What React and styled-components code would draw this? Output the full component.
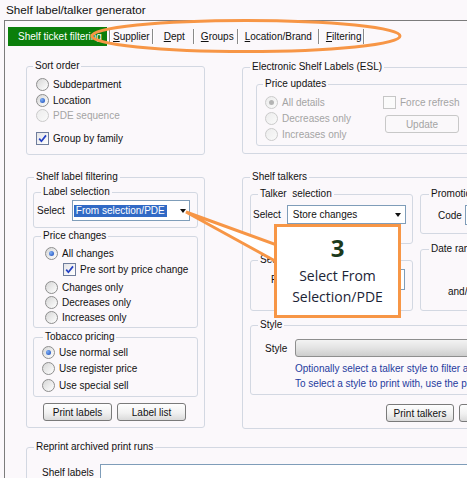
import React from 'react';
import styled, { createGlobalStyle } from 'styled-components';

const Global = createGlobalStyle`
  html, body { margin: 0; padding: 0; background: #fbf8fb; }
  body { font-family: "Liberation Sans", Arial, sans-serif; font-size: 10px; color: #111; }
  * { box-sizing: border-box; }
`;

const Page = styled.div`
  position: relative;
  width: 467px;
  height: 478px;
  overflow: hidden;
  background: #fbf8fb;
`;

const Title = styled.div`
  height: 20px;
  line-height: 20px;
  padding-left: 6px;
  font-size: 11.7px;
  color: #111;
  white-space: nowrap;
`;

const Frame = styled.div`
  margin-left: 4px;
  width: 760px;
  border-top: 1px solid #7c7c7c;
  border-left: 1px solid #7c7c7c;
`;

const TabStrip = styled.div`
  display: flex;
  align-items: center;
  height: 25px;
  padding: 6px 0 0 3px;
`;

const ActiveTab = styled.div`
  display: flex;
  align-items: center;
  height: 19px;
  width: 99px;
  margin-right: 2px;
  padding-left: 10px;
  background: #0b7f0b;
  color: #fff;
  white-space: nowrap;
`;

const Tab = styled.div`
  display: flex;
  align-items: center;
  height: 19px;
  padding: 0 ${p => p.$pr}px 0 ${p => p.$pl}px;
  white-space: nowrap;
  color: #111;
  u { text-decoration: underline; text-underline-offset: 1px; }
`;

const Sep = styled.span`
  width: 2px;
  height: 15px;
  border-left: 1px solid #8a8a8a;
  border-right: 1px solid #ffffff;
  flex-shrink: 0;
`;

const Panel = styled.div`
  padding: 14px 0 0 21px;
`;

const Columns = styled.div`
  display: flex;
  gap: 37px;
  align-items: flex-start;
`;

const Column = styled.div`
  display: flex;
  flex-direction: column;
  width: ${p => p.$w}px;
  margin-top: ${p => p.$mt || 0}px;
  flex-shrink: 0;
`;

const Group = styled.fieldset`
  margin: ${p => p.$mt || 0}px 0 0 0;
  padding: 0;
  border: 1px solid #d3d8e2;
  border-radius: 3px;
  min-width: 0;
  width: ${p => (p.$w ? `${p.$w}px` : 'auto')};
  height: ${p => p.$h}px;
  flex-shrink: 0;
`;

const Legend = styled.legend`
  margin-left: ${p => (p.$ml ?? 7)}px;
  padding: 0 2px;
  line-height: 12px;
  font-size: 10px;
  color: #111;
  white-space: nowrap;
`;

const Body = styled.div`
  padding: ${p => p.$p || '0'};
`;

const Row = styled.div`
  display: flex;
  align-items: center;
  gap: 4px;
  height: ${p => p.$h || 15.5}px;
  margin-top: ${p => p.$mt || 0}px;
  margin-left: ${p => p.$ml || 0}px;
  white-space: nowrap;
`;

const Text = styled.span`
  color: ${p => (p.$disabled ? '#a4a4a4' : '#111')};
  white-space: nowrap;
  margin-left: ${p => p.$ml || 0}px;
`;

const RadioCircle = styled.span`
  width: 13px;
  height: 13px;
  border-radius: 50%;
  flex-shrink: 0;
  display: flex;
  align-items: center;
  justify-content: center;
  border: 1px solid ${p => (p.$disabled ? '#cbcbcb' : '#8e8e8e')};
  background: ${p => (p.$disabled ? 'linear-gradient(135deg, #ececec, #fafafa)' : 'linear-gradient(135deg, #d6d6d6, #ffffff)')};
  &::after {
    content: '';
    display: ${p => (p.$checked ? 'block' : 'none')};
    width: 5px;
    height: 5px;
    border-radius: 50%;
    background: ${p => (p.$disabled ? '#b4b4b4' : 'radial-gradient(circle at 35% 35%, #7fb0f5, #1747b8)')};
  }
`;

const CheckBox = styled.span`
  width: 13px;
  height: 13px;
  flex-shrink: 0;
  display: flex;
  align-items: center;
  justify-content: center;
  border: 1px solid ${p => (p.$disabled ? '#c6c6c6' : '#6f7d9c')};
  background: ${p => (p.$disabled ? '#fbfbfb' : 'linear-gradient(135deg, #e4e4e8, #ffffff)')};
`;

const Combo = styled.div`
  display: flex;
  align-items: center;
  width: ${p => p.$w}px;
  height: ${p => p.$h || 21}px;
  margin-left: ${p => p.$ml || 0}px;
  padding: 0 ${p => p.$pr ?? 3}px 0 ${p => p.$pl ?? 1}px;
  border: 1px solid #7f9db9;
  background: #fff;
  flex-shrink: 0;
`;

const ComboText = styled.span`
  flex: 1;
  white-space: nowrap;
  span {
    display: inline-block;
    padding: 0 2px;
    line-height: 12px;
    background: ${p => (p.$selected ? '#316ac5' : 'transparent')};
    color: ${p => (p.$selected ? '#fff' : '#111')};
  }
`;

const Arrow = styled.span`
  width: 0;
  height: 0;
  border-left: 3.5px solid transparent;
  border-right: 3.5px solid transparent;
  border-top: 4px solid #111;
  flex-shrink: 0;
`;

const Input = styled.div`
  width: ${p => p.$w}px;
  height: ${p => p.$h || 20}px;
  margin-left: ${p => p.$ml || 0}px;
  border: 1px solid #7f9db9;
  background: #fff;
  flex-shrink: 0;
`;

const Button = styled.div`
  display: flex;
  align-items: center;
  justify-content: center;
  width: ${p => p.$w}px;
  height: 18px;
  margin-left: ${p => p.$ml || 0}px;
  border: 1px solid ${p => (p.$disabled ? '#c8c8c8' : '#7a7a7a')};
  border-radius: 3px;
  background: ${p => (p.$disabled ? '#faf8fa' : 'linear-gradient(#fefefe, #f1f1f1 55%, #dadada)')};
  color: ${p => (p.$disabled ? '#a4a4a4' : '#111')};
  white-space: nowrap;
  flex-shrink: 0;
`;

const ButtonRow = styled.div`
  display: flex;
  gap: 5px;
  margin-top: ${p => p.$mt || 0}px;
  margin-left: ${p => p.$ml || 0}px;
`;

const SplitRow = styled.div`
  display: flex;
  gap: ${p => p.$gap || 0}px;
  align-items: flex-start;
`;

const Stack = styled.div`
  display: flex;
  flex-direction: column;
  width: ${p => (p.$w ? `${p.$w}px` : 'auto')};
  flex-shrink: 0;
`;

const StyleBar = styled.div`
  width: 300px;
  height: 18px;
  margin-left: 8px;
  border: 1px solid #8e8e8e;
  border-radius: 3px 0 0 3px;
  background: linear-gradient(#f3f3f3, #e3e3e3 50%, #cdcdcd);
  flex-shrink: 0;
`;

const Hint = styled.div`
  margin: ${p => p.$mt ?? 0}px 0 0 30px;
  line-height: 15px;
  color: #1f3b9e;
  white-space: nowrap;
`;

const Overlay = styled.svg`
  position: absolute;
  left: 0;
  top: 0;
  pointer-events: none;
`;

const Callout = styled.div`
  position: absolute;
  left: 274px;
  top: 224px;
  width: 127px;
  height: 94px;
  border: 3px solid #f79646;
  background: #fff;
  display: flex;
  flex-direction: column;
  align-items: center;
  padding-top: 7px;
  font-family: "Open Sans", "Noto Sans", sans-serif;
`;

const CalloutNum = styled.div`
  font-size: 24px;
  font-weight: 700;
  line-height: 28px;
  color: #1c3a1c;
`;

const CalloutLine = styled.div`
  font-size: 14px;
  line-height: 21px;
  color: #1b2436;
  white-space: nowrap;
  margin-top: ${p => p.$mt || 0}px;
`;

const Radio = ({ label, checked, disabled, h, mt }) => (
  <Row $h={h} $mt={mt}>
    <RadioCircle $checked={checked} $disabled={disabled} />
    <Text $disabled={disabled}>{label}</Text>
  </Row>
);

const Check = ({ label, checked, disabled, h, mt, ml }) => (
  <Row $h={h} $mt={mt} $ml={ml}>
    <CheckBox $disabled={disabled}>
      {checked && (
        <svg width="11" height="11" viewBox="0 0 11 11">
          <path d="M2.2 5.6 L4.4 8.2 L9 2.4" fill="none" stroke="#2440c4" strokeWidth="1.7" />
        </svg>
      )}
    </CheckBox>
    <Text $disabled={disabled}>{label}</Text>
  </Row>
);

export default function App() {
  return (
    <>
      <Global />
      <Page>
        <Title>Shelf label/talker generator</Title>
        <Frame>
          <TabStrip>
            <ActiveTab>Shelf ticket filtering</ActiveTab>
            <Sep />
            <Tab $pl={2} $pr={2}><u>S</u>upplier</Tab>
            <Sep />
            <Tab $pl={10} $pr={8}><u>D</u>ept</Tab>
            <Sep />
            <Tab $pl={6} $pr={3}><u>G</u>roups</Tab>
            <Sep />
            <Tab $pl={6} $pr={6}><u>L</u>ocation/Brand</Tab>
            <Sep />
            <Tab $pl={6} $pr={1}><u>F</u>iltering</Tab>
            <Sep />
          </TabStrip>
          <Panel>
            <Columns>
              <Column $w={179}>
                <Group $h={95}>
                  <Legend $ml={6}>Sort order</Legend>
                  <Body $p="5px 0 0 9px">
                    <Radio label="Subdepartment" />
                    <Radio label="Location" checked />
                    <Radio label="PDE sequence" disabled />
                    <Check label="Group by family" checked mt={7} />
                  </Body>
                </Group>
                <Group $h={257} $mt={16}>
                  <Legend>Shelf label filtering</Legend>
                  <Body $p="3px 6px 0 6px">
                    <Group $h={42}>
                      <Legend>Label selection</Legend>
                      <Body $p="2px 0 0 3px">
                        <Row $h={21}>
                          <Text>Select</Text>
                          <Combo $w={118} $ml={3}>
                            <ComboText $selected><span>From selection/PDE</span></ComboText>
                            <Arrow />
                          </Combo>
                        </Row>
                      </Body>
                    </Group>
                    <Group $h={98} $mt={2}>
                      <Legend>Price changes</Legend>
                      <Body $p="3px 0 0 11px">
                        <Radio label="All changes" checked h={16} />
                        <Check label="Pre sort by price change" checked h={16} ml={18} />
                        <Radio label="Changes only" h={15} mt={2.5} />
                        <Radio label="Decreases only" h={15} />
                        <Radio label="Increases only" h={15} />
                      </Body>
                    </Group>
                    <Group $h={66} $mt={3}>
                      <Legend $ml={9}>Tobacco pricing</Legend>
                      <Body $p="1px 0 0 8px">
                        <Radio label="Use normal sell" checked h={16.5} />
                        <Radio label="Use register price" h={16.5} />
                        <Radio label="Use special sell" h={16.5} />
                      </Body>
                    </Group>
                    <ButtonRow $mt={6} $ml={10}>
                      <Button $w={69}>Print labels</Button>
                      <Button $w={69}>Label list</Button>
                    </ButtonRow>
                  </Body>
                </Group>
              </Column>

              <Column $w={420} $mt={1}>
                <Group $h={93} $w={420}>
                  <Legend>Electronic Shelf Labels (ESL)</Legend>
                  <Body $p="5px 0 0 13px">
                    <Group $h={68} $w={380}>
                      <Legend $ml={6}>Price updates</Legend>
                      <Body $p="4px 0 0 8px">
                        <SplitRow>
                          <Stack $w={118}>
                            <Radio label="All details" checked disabled h={16} />
                            <Radio label="Decreases only" disabled h={16} />
                            <Radio label="Increases only" disabled h={16} />
                          </Stack>
                          <Stack>
                            <Check label="Force refresh" disabled h={16} />
                            <ButtonRow $mt={5} $ml={2}>
                              <Button $w={74} $disabled>Update</Button>
                            </ButtonRow>
                          </Stack>
                        </SplitRow>
                      </Body>
                    </Group>
                  </Body>
                </Group>
                <Group $h={258} $w={420} $mt={17}>
                  <Legend>Shelf talkers</Legend>
                  <Body $p="5px 0 0 7px">
                    <SplitRow $gap={7}>
                      <Stack $w={163}>
                        <Group $h={56}>
                          <Legend>Talker&nbsp; selection</Legend>
                          <Body $p="5px 0 0 2px">
                            <Row $h={19}>
                              <Text>Select</Text>
                              <Combo $w={119} $h={19} $ml={2} $pl={3} $pr={4}>
                                <ComboText><span>Store changes</span></ComboText>
                                <Arrow />
                              </Combo>
                            </Row>
                          </Body>
                        </Group>
                        <Group $h={57} $mt={10}>
                          <Legend>Sequence</Legend>
                          <Body $p="3px 0 0 20px">
                            <Row $h={21}>
                              <Text>Print</Text>
                              <Combo $w={101} $ml={8}>
                                <ComboText><span>All</span></ComboText>
                                <Arrow />
                              </Combo>
                            </Row>
                          </Body>
                        </Group>
                      </Stack>
                      <Stack $w={200}>
                        <Group $h={46}>
                          <Legend $ml={8}>Promotion</Legend>
                          <Body $p="5px 0 0 17px">
                            <Row $h={20}>
                              <Text>Code</Text>
                              <Input $w={100} $ml={-1} />
                            </Row>
                          </Body>
                        </Group>
                        <Group $h={68} $mt={9}>
                          <Legend $ml={8}>Date range</Legend>
                          <Body $p="28px 0 0 27px">
                            <Row $h={16}>
                              <Text>and/or</Text>
                            </Row>
                          </Body>
                        </Group>
                      </Stack>
                    </SplitRow>
                    <Group $h={76} $w={330} $mt={8}>
                      <Legend>Style</Legend>
                      <Body $p="8px 0 0 14px">
                        <Row $h={18} style={{ gap: 0 }}>
                          <Text>Style</Text>
                          <StyleBar />
                        </Row>
                        <Hint $mt={3.5}>Optionally select a talker style to filter all talkers by.</Hint>
                        <Hint>To select a style to print with, use the print options.</Hint>
                      </Body>
                    </Group>
                    <ButtonRow $mt={9} $ml={136}>
                      <Button $w={68}>Print talkers</Button>
                      <Button $w={68}>Talker list</Button>
                    </ButtonRow>
                  </Body>
                </Group>
              </Column>
            </Columns>

            <Group $h={80} $w={700} $mt={12}>
              <Legend>Reprint archived print runs</Legend>
              <Body $p="11px 0 0 15px">
                <Row $h={22} style={{ alignItems: 'flex-start' }}>
                  <Text style={{ marginTop: 3 }}>Shelf labels</Text>
                  <Input $w={500} $h={22} $ml={2} />
                </Row>
              </Body>
            </Group>
          </Panel>
        </Frame>

        <Overlay width="467" height="478" viewBox="0 0 467 478">
          <ellipse cx="246" cy="36" rx="154" ry="15.5" fill="none" stroke="#f79646" strokeWidth="3" />
          <polygon points="186,212 277,245 277,262" fill="#ffffff" stroke="#f79646" strokeWidth="3" strokeLinejoin="miter" />
        </Overlay>
        <Callout>
          <CalloutNum>3</CalloutNum>
          <CalloutLine $mt={3}>Select From</CalloutLine>
          <CalloutLine>Selection/PDE</CalloutLine>
        </Callout>
      </Page>
    </>
  );
}
